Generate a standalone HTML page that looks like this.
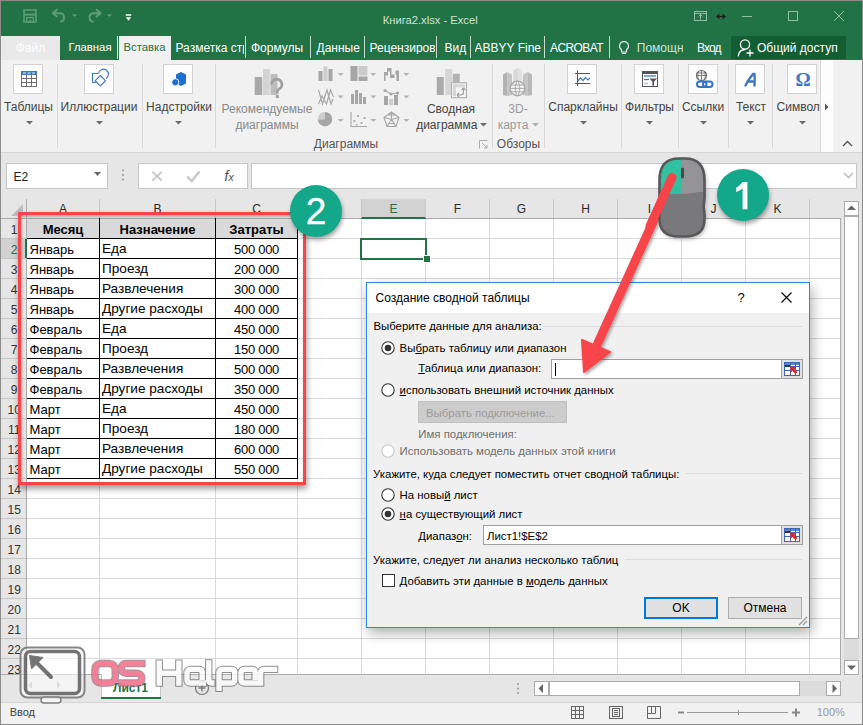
<!DOCTYPE html><html><head><meta charset="utf-8"><style>
html,body{margin:0;padding:0;width:863px;height:725px;overflow:hidden;background:#f1f1f1;font-family:"Liberation Sans", sans-serif;}
.a{position:absolute;}
.t{position:absolute;white-space:nowrap;line-height:1;}
svg{position:absolute;overflow:visible}
</style></head><body>
<div class="a" style="left:0px;top:0px;width:863px;height:60px;background:#217346"></div>
<div class="t" style="left:430.2px;transform:translateX(-50%);top:14.92px;font-size:11.2px;color:#cfe3d6;font-weight:400;">Книга2.xlsx - Excel</div>
<svg style="left:0;top:0" width="140" height="36">
<g fill="none" stroke="#5e9c78" stroke-width="1.6">
<rect x="24" y="10" width="12" height="12"/>
<path d="M24 14.6h12" stroke-width="2"/>
<rect x="26.6" y="17.6" width="6.8" height="4.4" stroke-width="1.3"/>
</g>
<rect x="29.2" y="19.8" width="1.6" height="2.4" fill="#5e9c78"/>
<g fill="none" stroke="#5e9c78" stroke-width="2" stroke-linejoin="round">
<path d="M57.5 9.3L52.8 13.2 57.5 17.1"/><path d="M53.3 13.2H59.5C62.3 13.2 64 15 64 17.4 64 19.8 62.3 21.4 60 21.7"/>
<path d="M96 9.3L100.7 13.2 96 17.1"/><path d="M100.2 13.2H94C91.2 13.2 89.5 15 89.5 17.4 89.5 19.8 91.2 21.4 93.5 21.7"/>
</g>
<path d="M72 14.2h5l-2.5 2.8z M107 14.2h5l-2.5 2.8z" fill="#5e9c78"/>
<path d="M125.8 14.3h5.4v1.5h-5.4z M125.8 17.2h5.4l-2.7 3.6z" fill="#fff"/>
</svg>
<svg style="left:680;top:0;left:680px" width="183" height="36">
<g fill="none" stroke="#8fbfa2" stroke-width="1">
<rect x="14.5" y="11.5" width="12" height="9"/><path d="M14.5 13.5h12M20.5 19.5v-5M18.5 16.5l2-2 2 2"/>
<path d="M62 16.5h10"/>
<rect x="108.5" y="11.5" width="9" height="9"/>
<path d="M154 11l10 10M164 11l-10 10"/>
</g>
<path d="M37 16.5h8" stroke="#1e1e1e" stroke-width="1.2"/><path d="M36 16.5l3.5-3v6zM46 16.5l-3.5-3v6z" fill="#1e1e1e"/>
</svg>
<div class="a" style="left:1px;top:36px;width:59px;height:24px;background:#e9e9e9"></div>
<div class="t" style="left:30.5px;transform:translateX(-50%);top:41.84px;font-size:12px;color:#ffffff;font-weight:400;">Файл</div>
<div class="t" style="left:68.5px;top:42.43px;font-size:11.3px;color:#ffffff;font-weight:400;">Главная</div>
<div class="a" style="left:117px;top:36px;width:1px;height:23px;background:#d8e8dd"></div>
<div class="a" style="left:119px;top:36px;width:52px;height:24px;background:#f1f1f1"></div>
<div class="t" style="left:123.5px;top:42.43px;font-size:11.3px;color:#217346;font-weight:400;">Вставка</div>
<div class="t" style="left:175.5px;top:41.84px;font-size:12px;color:#ffffff;font-weight:400;width:68px;overflow:hidden;">Разметка стр</div>
<div class="a" style="left:245px;top:36px;width:1px;height:22px;background:#c8dccf"></div>
<div class="a" style="left:310px;top:36px;width:1px;height:22px;background:#c8dccf"></div>
<div class="a" style="left:364px;top:36px;width:1px;height:22px;background:#c8dccf"></div>
<div class="a" style="left:436px;top:36px;width:1px;height:22px;background:#c8dccf"></div>
<div class="a" style="left:470px;top:36px;width:1px;height:22px;background:#c8dccf"></div>
<div class="a" style="left:544px;top:36px;width:1px;height:22px;background:#c8dccf"></div>
<div class="a" style="left:609px;top:36px;width:1px;height:22px;background:#c8dccf"></div>
<div class="t" style="left:251px;top:41.84px;font-size:12px;color:#ffffff;font-weight:400;">Формулы</div>
<div class="t" style="left:316.5px;top:41.84px;font-size:12px;color:#ffffff;font-weight:400;">Данные</div>
<div class="t" style="left:369.5px;top:41.84px;font-size:12px;color:#ffffff;font-weight:400;width:65px;overflow:hidden;">Рецензирование</div>
<div class="t" style="left:444.5px;top:41.84px;font-size:12px;color:#ffffff;font-weight:400;">Вид</div>
<div class="t" style="left:474.5px;top:41.84px;font-size:12px;color:#ffffff;font-weight:400;width:66px;overflow:hidden;">ABBYY FineReader</div>
<div class="t" style="left:550px;top:41.84px;font-size:12px;color:#ffffff;font-weight:400;letter-spacing:-0.6px">ACROBAT</div>
<svg style="left:617px;top:40px" width="14" height="16"><path d="M7 1.5a4.5 4.5 0 0 0-2.5 8.2v2.3h5v-2.3A4.5 4.5 0 0 0 7 1.5zM5 13.5h4" fill="none" stroke="#fff" stroke-width="1.1"/></svg>
<div class="t" style="left:636.8px;top:41.84px;font-size:12px;color:#cfe3d6;font-weight:400;width:46px;overflow:hidden;">Помощн</div>
<div class="t" style="left:697px;top:41.84px;font-size:12px;color:#ffffff;font-weight:400;letter-spacing:-0.9px">Вход</div>
<div class="a" style="left:731px;top:36px;width:115px;height:23px;background:#135d33"></div>
<svg style="left:736px;top:38px" width="20" height="20"><g fill="none" stroke="#fff" stroke-width="1.3"><circle cx="9" cy="6.5" r="4.6"/><path d="M2.2 18.3c0.5-4 3.2-6.8 7-6.8"/><path d="M14 11.5v7M10.5 15h7"/></g></svg>
<div class="t" style="left:757px;top:41.84px;font-size:12px;color:#ffffff;font-weight:400;">Общий доступ</div>
<div class="a" style="left:1px;top:60px;width:861px;height:92px;background:#f1f1f1"></div>
<div class="a" style="left:1px;top:152px;width:861px;height:1px;background:#d5d5d5"></div>
<div class="a" style="left:57px;top:64px;width:1px;height:84px;background:#d9d9d9"></div>
<div class="a" style="left:142px;top:64px;width:1px;height:84px;background:#d9d9d9"></div>
<div class="a" style="left:215px;top:64px;width:1px;height:84px;background:#d9d9d9"></div>
<div class="a" style="left:492px;top:64px;width:1px;height:84px;background:#d9d9d9"></div>
<div class="a" style="left:544px;top:64px;width:1px;height:84px;background:#d9d9d9"></div>
<div class="a" style="left:621px;top:64px;width:1px;height:84px;background:#d9d9d9"></div>
<div class="a" style="left:678px;top:64px;width:1px;height:84px;background:#d9d9d9"></div>
<div class="a" style="left:728px;top:64px;width:1px;height:84px;background:#d9d9d9"></div>
<div class="a" style="left:772px;top:64px;width:1px;height:84px;background:#d9d9d9"></div>
<div class="a" style="left:13px;top:64px;width:30px;height:30px;background:#fdfdfd;border:1px solid #d2d2d2;box-sizing:border-box"></div>
<div class="t" style="left:28.5px;transform:translateX(-50%);top:100.84px;font-size:12px;color:#444;font-weight:400;">Таблицы</div>
<svg style="left:25.5px;top:120.5px" width="7" height="4"><path d="M0 0h7l-3.5 3.5z" fill="#6a6a6a"/></svg>
<svg style="left:13px;top:64px" width="30" height="30"><rect x="8.5" y="7.5" width="15" height="15" fill="#fff" stroke="#6d6d6d" stroke-width="1"/><rect x="8" y="7" width="16" height="4" fill="#3f78c0"/><path d="M10 9h3M14.5 9h3M19 9h3" stroke="#fff" stroke-width="0.9"/><path d="M8.5 14.5h15M8.5 18.5h15M13.5 11v11.5M18.5 11v11.5" stroke="#6d6d6d" stroke-width="1"/></svg>
<div class="a" style="left:84px;top:64px;width:30px;height:30px;background:#fdfdfd;border:1px solid #d2d2d2;box-sizing:border-box"></div>
<div class="t" style="left:99px;transform:translateX(-50%);top:100.84px;font-size:12px;color:#444;font-weight:400;">Иллюстрации</div>
<svg style="left:96px;top:120.5px" width="7" height="4"><path d="M0 0h7l-3.5 3.5z" fill="#6a6a6a"/></svg>
<svg style="left:84px;top:64px" width="30" height="30"><path d="M14 9.5h-5.5v9h4.5" fill="none" stroke="#3f78c0" stroke-width="1.1"/><path d="M14.5 9.5a5 5 0 1 1 7.5 5" fill="none" stroke="#3f78c0" stroke-width="1.1"/><path d="M16.3 11.5l5.2 5.2-5.2 5.2-5.2-5.2z" fill="#fff" stroke="#3f78c0" stroke-width="1.1"/></svg>
<div class="a" style="left:163px;top:64px;width:30px;height:30px;background:#fdfdfd;border:1px solid #d2d2d2;box-sizing:border-box"></div>
<div class="t" style="left:179px;transform:translateX(-50%);top:100.84px;font-size:12px;color:#444;font-weight:400;">Надстройки</div>
<svg style="left:175px;top:120.5px" width="7" height="4"><path d="M0 0h7l-3.5 3.5z" fill="#6a6a6a"/></svg>
<svg style="left:163px;top:64px" width="30" height="30"><path d="M18 8l5 2.6v8.8l-5 2.6-5-2.6v-8.8z" fill="#1f6fd0"/><circle cx="12.3" cy="18.3" r="3.6" fill="#1f6fd0" stroke="#fff" stroke-width="0.9"/></svg>
<svg style="left:250px;top:62px" width="40" height="40"><rect x="4.7" y="15" width="7.5" height="18" fill="#a9a9a9"/><rect x="13" y="7" width="6.7" height="26" fill="#d3d3d3"/><rect x="20.5" y="12" width="7" height="21" fill="#bdbdbd"/><path d="M21.5 22.5a5.2 5.2 0 1 1 7.5 4.6c-1.2 0.7-1.8 1.5-1.8 3v1.5" fill="none" stroke="#a0a0a0" stroke-width="2.8"/><rect x="25.8" y="33" width="3" height="3" fill="#a0a0a0"/></svg>
<div class="t" style="left:267px;transform:translateX(-50%);top:103.34px;font-size:12px;color:#8a8a8a;font-weight:400;">Рекомендуемые</div>
<div class="t" style="left:267px;transform:translateX(-50%);top:118.84px;font-size:12px;color:#8a8a8a;font-weight:400;">диаграммы</div>
<svg style="left:316px;top:64px" width="96" height="68">
<g fill="#a6a6a6">
<rect x="2.5" y="7" width="4" height="10"/><rect x="7.5" y="2.5" width="4" height="14.5" fill="#cdcdcd"/><rect x="12.5" y="5" width="4" height="12"/>
<rect x="34.5" y="2" width="7" height="15"/><rect x="42.5" y="2" width="9" height="9.5" fill="#cbcbcb"/><rect x="42.5" y="12.5" width="9" height="4.5"/>
<path d="M68 17v-9h3v-4h4.5v6.5h4v-4h3.5v10.5h-2.5v-6.5h-2v3.5h-4.5v-6.5h-2v4h-2.5v5.5z"/>
<rect x="35" y="30" width="3" height="10"/><rect x="39" y="26" width="3" height="14"/><rect x="43" y="29" width="3" height="11"/><rect x="47" y="33" width="3" height="7"/>
<rect x="68" y="32" width="4" height="9"/><rect x="73" y="35" width="4" height="6" fill="#cdcdcd"/><rect x="78" y="31" width="4" height="10"/>
<circle cx="69" cy="26.5" r="1.6"/><circle cx="75" cy="30" r="1.6"/><circle cx="81.5" cy="29" r="1.6"/>
</g>
<g fill="none" stroke="#a6a6a6" stroke-width="1.1">
<path d="M2.5 26l4 14 4.5-14 4 14 2-5M2.5 40l3.5-8 4.5 8 4-14 3 7"/>
<path d="M69 26.5l6 3.5 6.5-1"/>
<path d="M35 48v14.5h16"/>
<path d="M75.5 48l7.5 5.5-3 9h-9l-3-9z M75.5 48v7.5M68 53.5l7.5 2 7.5-2M75.5 55.5l-4.5 7M75.5 55.5l4.5 7M71 51l9 0M72 59.5h7"/>
</g>
<path d="M9 55.2V48a7.2 7.2 0 1 1-7.2 7.2z" fill="#a6a6a6"/><path d="M9 55.2H1.8A7.2 7.2 0 0 1 9 48z" fill="#cdcdcd"/>
<g fill="#b0b0b0"><rect x="37.5" y="56" width="2" height="2"/><rect x="41" y="51" width="2" height="2"/><rect x="44.5" y="58" width="2" height="2"/><rect x="47.5" y="53" width="2" height="2"/><rect x="40" y="60" width="1.6" height="1.6"/></g>
<g fill="#b4b4b4"><path d="M21.6 9h6l-3 3z"/><path d="M54.3 9h6l-3 3z"/><path d="M87.3 9h6l-3 3z"/><path d="M21.6 31.5h6l-3 3z"/><path d="M54.3 31.5h6l-3 3z"/><path d="M87.3 31.5h6l-3 3z"/><path d="M21.6 55h6l-3 3z"/><path d="M54.3 55h6l-3 3z"/><path d="M87.3 55h6l-3 3z"/></g>
</svg>
<svg style="left:425px;top:62px" width="45" height="40"><rect x="11.8" y="15" width="7" height="18" fill="#ababab"/><rect x="20.2" y="7" width="7" height="26" fill="#d6d6d6"/><rect x="27.8" y="11.8" width="7" height="9" fill="#b3b3b3"/><rect x="26.5" y="20.7" width="15" height="15" fill="#f4f4f4" stroke="#b0b0b0" stroke-width="1.1"/><rect x="28" y="22.3" width="12" height="3" fill="#d6d6d6"/><rect x="28" y="22.3" width="3" height="12" fill="#d6d6d6"/><path d="M32 33l2-2M32 33l2 2M32 33h3.5a3 3 0 0 0 3-3v-4M38.5 26l-2 2M38.5 26l2 2" fill="none" stroke="#a0a0a0" stroke-width="1.1"/></svg>
<div class="t" style="left:451px;transform:translateX(-50%);top:103.34px;font-size:12px;color:#444;font-weight:400;">Сводная</div>
<div class="t" style="left:446.8px;transform:translateX(-50%);top:118.84px;font-size:12px;color:#444;font-weight:400;">диаграмма</div>
<svg style="left:479.5px;top:122.5px" width="7" height="4"><path d="M0 0h7l-3.5 3.5z" fill="#6a6a6a"/></svg>
<div class="t" style="left:346px;transform:translateX(-50%);top:138.44px;font-size:12px;color:#555;font-weight:400;">Диаграммы</div>
<svg style="left:479px;top:140px" width="9" height="9"><path d="M0.5 8.5v-8h8" fill="none" stroke="#aaa"/><path d="M3 3l5 5M8 5v3h-3" fill="none" stroke="#aaa"/></svg>
<svg style="left:500px;top:62px" width="36" height="40"><path d="M3 12.5l4.5-2.5v24l-4.5-1z" fill="#b3b3b3"/><path d="M7.5 10l4.5 2.5v20.5l-4.5 1z" fill="#c4c4c4"/><path d="M13.3 8.5l4.5-2.5v22h-4.5z" fill="#d9d6d9"/><path d="M17.8 6l4.5 2.5v19.5h-4.5z" fill="#e2e0e2"/><path d="M23 12.5l4.5-2.5v24l-4.5-1z" fill="#c4c4c4"/><path d="M27.5 10l4.5 2.5v20.5l-4.5 1z" fill="#b8b8b8"/><circle cx="17.5" cy="26.4" r="7.3" fill="#f4f4f4" stroke="#a9a9a9" stroke-width="1.4"/><path d="M10.5 26.4h14M11.5 23h12M11.5 29.8h12M17.5 19c-3 3.5-3 11.3 0 14.8M17.5 19c3 3.5 3 11.3 0 14.8" fill="none" stroke="#a9a9a9" stroke-width="1"/></svg>
<div class="t" style="left:518px;transform:translateX(-50%);top:103.34px;font-size:12px;color:#9a9a9a;font-weight:400;">3D-</div>
<div class="t" style="left:513px;transform:translateX(-50%);top:118.84px;font-size:12px;color:#9a9a9a;font-weight:400;">карта</div>
<svg style="left:532px;top:122.5px" width="7" height="4"><path d="M0 0h7l-3.5 3.5z" fill="#b0b0b0"/></svg>
<div class="t" style="left:518.5px;transform:translateX(-50%);top:138.44px;font-size:12px;color:#555;font-weight:400;">Обзоры</div>
<div class="a" style="left:567px;top:64px;width:30px;height:30px;background:#fdfdfd;border:1px solid #d2d2d2;box-sizing:border-box"></div>
<div class="t" style="left:583px;transform:translateX(-50%);top:100.84px;font-size:12px;color:#444;font-weight:400;">Спарклайны</div>
<svg style="left:580px;top:120.5px" width="7" height="4"><path d="M0 0h7l-3.5 3.5z" fill="#6a6a6a"/></svg>
<svg style="left:567px;top:64px" width="30" height="30"><path d="M10.5 6.5v15.5M8 9.5h15M8 19.5h15" stroke="#555" stroke-width="1.1" fill="none"/><path d="M11 17l2.5-3 2.5 2.5 2.5-3 2.5 2.5 2-2" stroke="#4a7ebb" stroke-width="1.2" fill="none"/></svg>
<div class="a" style="left:634px;top:64px;width:30px;height:30px;background:#fdfdfd;border:1px solid #d2d2d2;box-sizing:border-box"></div>
<div class="t" style="left:649.5px;transform:translateX(-50%);top:100.84px;font-size:12px;color:#444;font-weight:400;">Фильтры</div>
<svg style="left:646px;top:120.5px" width="7" height="4"><path d="M0 0h7l-3.5 3.5z" fill="#6a6a6a"/></svg>
<svg style="left:634px;top:64px" width="30" height="30"><rect x="8.5" y="7.5" width="15" height="15" fill="#fff" stroke="#555" stroke-width="1"/><rect x="8" y="7" width="16" height="3" fill="#555"/><path d="M10 12h12" stroke="#3f78c0" stroke-width="1.3"/><path d="M10 15.5h5" stroke="#3f78c0" stroke-width="1.3"/><path d="M10 19.5h4" stroke="#a9c3e3" stroke-width="1.3"/><path d="M15.5 14.5h7.5l-3 3.2v4h-1.6v-4z" fill="#555"/></svg>
<div class="a" style="left:688px;top:64px;width:30px;height:30px;background:#fdfdfd;border:1px solid #d2d2d2;box-sizing:border-box"></div>
<div class="t" style="left:703px;transform:translateX(-50%);top:100.84px;font-size:12px;color:#444;font-weight:400;">Ссылки</div>
<svg style="left:700px;top:120.5px" width="7" height="4"><path d="M0 0h7l-3.5 3.5z" fill="#6a6a6a"/></svg>
<svg style="left:688px;top:64px" width="30" height="30"><circle cx="13.5" cy="11.5" r="5" fill="#fff" stroke="#666" stroke-width="1.1"/><path d="M8.5 11.5h10M8.5 9h10M13.5 6.5v10M10.5 7.5c-1 2-1 6 0 8M16.5 7.5c1 2 1 6 0 8" fill="none" stroke="#666" stroke-width="0.8"/><rect x="9" y="17.5" width="9.5" height="5.5" rx="2.75" fill="none" stroke="#3574c4" stroke-width="2"/><rect x="15" y="17.5" width="9.5" height="5.5" rx="2.75" fill="none" stroke="#3574c4" stroke-width="2"/></svg>
<div class="a" style="left:735px;top:64px;width:30px;height:30px;background:#fdfdfd;border:1px solid #d2d2d2;box-sizing:border-box"></div>
<div class="t" style="left:751px;transform:translateX(-50%);top:100.84px;font-size:12px;color:#444;font-weight:400;">Текст</div>
<svg style="left:747px;top:120.5px" width="7" height="4"><path d="M0 0h7l-3.5 3.5z" fill="#6a6a6a"/></svg>
<svg style="left:735px;top:64px" width="30" height="30"><path d="M10.5 21.5c1.5-3 4.5-8 7.5-11.5h1.5c0.3 3.5 0.2 8 0 11.5M12.5 17.5h7" fill="none" stroke="#3f78c0" stroke-width="2.4" stroke-linecap="round" stroke-linejoin="round"/></svg>
<div class="a" style="left:787px;top:64px;width:30px;height:30px;background:#fdfdfd;border:1px solid #d2d2d2;box-sizing:border-box"></div>
<div class="t" style="left:776.6px;top:100.84px;font-size:12px;color:#444;font-weight:400;width:44px;overflow:hidden;">Символ</div>
<svg style="left:799px;top:120.5px" width="7" height="4"><path d="M0 0h7l-3.5 3.5z" fill="#6a6a6a"/></svg>
<svg style="left:787px;top:64px" width="30" height="30"><text x="16" y="21.5" text-anchor="middle" font-family="Liberation Serif" font-weight="700" font-size="19" fill="#3f78c0">Ω</text></svg>
<div class="a" style="left:820px;top:60px;width:13px;height:92px;background:#fdfdfd;border-left:1px solid #d6d6d6;box-sizing:border-box"></div>
<svg style="left:824px;top:103px" width="6" height="8"><path d="M1 0.5l3.5 3.5-3.5 3.5z" fill="#555"/></svg>
<svg style="left:842px;top:140px" width="11" height="7"><path d="M1 6l4.5-4.5 4.5 4.5" fill="none" stroke="#555" stroke-width="1.4"/></svg>
<div class="a" style="left:1px;top:153px;width:861px;height:46px;background:#e6e6e6"></div>
<div class="a" style="left:6px;top:163px;width:102px;height:26px;background:#fff;border:1px solid #c6c6c6;box-sizing:border-box"></div>
<div class="t" style="left:13.5px;top:171.34px;font-size:12px;color:#222;font-weight:400;">E2</div>
<svg style="left:94px;top:172px" width="8" height="5"><path d="M0 0h7l-3.5 4z" fill="#666"/></svg>
<svg style="left:121px;top:168px" width="4" height="16"><circle cx="2" cy="2.5" r="1" fill="#999"/><circle cx="2" cy="7" r="1" fill="#999"/><circle cx="2" cy="11.5" r="1" fill="#999"/></svg>
<div class="a" style="left:138px;top:163px;width:110px;height:26px;background:#fff;border:1px solid #c6c6c6;box-sizing:border-box"></div>
<svg style="left:138px;top:163px" width="110" height="26"><path d="M14.2 8.6l9.8 9M24 8.6l-9.8 9" stroke="#c4c4c4" stroke-width="1.7"/><path d="M49.3 13.6l4.4 4.6 7.7-9.6" stroke="#c8c8c8" stroke-width="2.4" fill="none"/></svg>
<div class="t" style="left:229px;transform:translateX(-50%);top:167.80px;font-size:15px;color:#555;font-weight:400;font-family:"Liberation Serif";font-weight:700;"><i>f</i><span style="font-size:11px"><i>x</i></span></div>
<div class="a" style="left:251px;top:163px;width:606px;height:26px;background:#fff;border:1px solid #c6c6c6;box-sizing:border-box"></div>
<svg style="left:843px;top:172px" width="11" height="7"><path d="M1 1l4.5 4.5 4.5-4.5" stroke="#bdbdbd" stroke-width="1.6" fill="none"/></svg>
<div class="a" style="left:1px;top:199px;width:861px;height:476px;background:#e6e6e6"></div>
<div class="a" style="left:26px;top:219px;width:814px;height:455px;background:#fff"></div>
<div class="a" style="left:26px;top:199px;width:815px;height:19px;background:#e6e6e6"></div>
<div class="a" style="left:361px;top:199px;width:64px;height:19px;background:#d2d2d2"></div>
<div class="a" style="left:1px;top:218px;width:840px;height:1px;background:#ababab"></div>
<div class="a" style="left:361px;top:217px;width:65px;height:2px;background:#217346"></div>
<div class="t" style="left:63.0px;transform:translateX(-50%);top:202.84px;font-size:12px;color:#2a2a2a;font-weight:400;">A</div>
<div class="t" style="left:157.5px;transform:translateX(-50%);top:202.84px;font-size:12px;color:#2a2a2a;font-weight:400;">B</div>
<div class="t" style="left:256.5px;transform:translateX(-50%);top:202.84px;font-size:12px;color:#2a2a2a;font-weight:400;">C</div>
<div class="t" style="left:329.5px;transform:translateX(-50%);top:202.84px;font-size:12px;color:#2a2a2a;font-weight:400;">D</div>
<div class="t" style="left:393.5px;transform:translateX(-50%);top:202.84px;font-size:12px;color:#217346;font-weight:400;">E</div>
<div class="t" style="left:457.5px;transform:translateX(-50%);top:202.84px;font-size:12px;color:#2a2a2a;font-weight:400;">F</div>
<div class="t" style="left:521.5px;transform:translateX(-50%);top:202.84px;font-size:12px;color:#2a2a2a;font-weight:400;">G</div>
<div class="t" style="left:585.5px;transform:translateX(-50%);top:202.84px;font-size:12px;color:#2a2a2a;font-weight:400;">H</div>
<div class="t" style="left:649.5px;transform:translateX(-50%);top:202.84px;font-size:12px;color:#2a2a2a;font-weight:400;">I</div>
<div class="t" style="left:713.5px;transform:translateX(-50%);top:202.84px;font-size:12px;color:#2a2a2a;font-weight:400;">J</div>
<div class="t" style="left:777.5px;transform:translateX(-50%);top:202.84px;font-size:12px;color:#2a2a2a;font-weight:400;">K</div>
<div class="a" style="left:99px;top:199px;width:1px;height:19px;background:#c6c6c6"></div>
<div class="a" style="left:215px;top:199px;width:1px;height:19px;background:#c6c6c6"></div>
<div class="a" style="left:297px;top:199px;width:1px;height:19px;background:#c6c6c6"></div>
<div class="a" style="left:361px;top:199px;width:1px;height:19px;background:#c6c6c6"></div>
<div class="a" style="left:425px;top:199px;width:1px;height:19px;background:#c6c6c6"></div>
<div class="a" style="left:489px;top:199px;width:1px;height:19px;background:#c6c6c6"></div>
<div class="a" style="left:553px;top:199px;width:1px;height:19px;background:#c6c6c6"></div>
<div class="a" style="left:617px;top:199px;width:1px;height:19px;background:#c6c6c6"></div>
<div class="a" style="left:681px;top:199px;width:1px;height:19px;background:#c6c6c6"></div>
<div class="a" style="left:745px;top:199px;width:1px;height:19px;background:#c6c6c6"></div>
<div class="a" style="left:809px;top:199px;width:1px;height:19px;background:#c6c6c6"></div>
<div class="a" style="left:26px;top:199px;width:1px;height:476px;background:#ababab"></div>
<svg style="left:10px;top:203px" width="14" height="14"><path d="M13 1v12h-12z" fill="#bdbdbd"/></svg>
<div class="a" style="left:99px;top:219px;width:1px;height:455px;background:#dadada"></div>
<div class="a" style="left:215px;top:219px;width:1px;height:455px;background:#dadada"></div>
<div class="a" style="left:297px;top:219px;width:1px;height:455px;background:#dadada"></div>
<div class="a" style="left:361px;top:219px;width:1px;height:455px;background:#dadada"></div>
<div class="a" style="left:425px;top:219px;width:1px;height:455px;background:#dadada"></div>
<div class="a" style="left:489px;top:219px;width:1px;height:455px;background:#dadada"></div>
<div class="a" style="left:553px;top:219px;width:1px;height:455px;background:#dadada"></div>
<div class="a" style="left:617px;top:219px;width:1px;height:455px;background:#dadada"></div>
<div class="a" style="left:681px;top:219px;width:1px;height:455px;background:#dadada"></div>
<div class="a" style="left:745px;top:219px;width:1px;height:455px;background:#dadada"></div>
<div class="a" style="left:809px;top:219px;width:1px;height:455px;background:#dadada"></div>
<div class="a" style="left:27px;top:238px;width:813px;height:1px;background:#dadada"></div>
<div class="a" style="left:1px;top:238px;width:25px;height:1px;background:#c6c6c6"></div>
<div class="a" style="left:27px;top:258px;width:813px;height:1px;background:#dadada"></div>
<div class="a" style="left:1px;top:258px;width:25px;height:1px;background:#c6c6c6"></div>
<div class="a" style="left:27px;top:278px;width:813px;height:1px;background:#dadada"></div>
<div class="a" style="left:1px;top:278px;width:25px;height:1px;background:#c6c6c6"></div>
<div class="a" style="left:27px;top:298px;width:813px;height:1px;background:#dadada"></div>
<div class="a" style="left:1px;top:298px;width:25px;height:1px;background:#c6c6c6"></div>
<div class="a" style="left:27px;top:318px;width:813px;height:1px;background:#dadada"></div>
<div class="a" style="left:1px;top:318px;width:25px;height:1px;background:#c6c6c6"></div>
<div class="a" style="left:27px;top:338px;width:813px;height:1px;background:#dadada"></div>
<div class="a" style="left:1px;top:338px;width:25px;height:1px;background:#c6c6c6"></div>
<div class="a" style="left:27px;top:358px;width:813px;height:1px;background:#dadada"></div>
<div class="a" style="left:1px;top:358px;width:25px;height:1px;background:#c6c6c6"></div>
<div class="a" style="left:27px;top:378px;width:813px;height:1px;background:#dadada"></div>
<div class="a" style="left:1px;top:378px;width:25px;height:1px;background:#c6c6c6"></div>
<div class="a" style="left:27px;top:398px;width:813px;height:1px;background:#dadada"></div>
<div class="a" style="left:1px;top:398px;width:25px;height:1px;background:#c6c6c6"></div>
<div class="a" style="left:27px;top:418px;width:813px;height:1px;background:#dadada"></div>
<div class="a" style="left:1px;top:418px;width:25px;height:1px;background:#c6c6c6"></div>
<div class="a" style="left:27px;top:438px;width:813px;height:1px;background:#dadada"></div>
<div class="a" style="left:1px;top:438px;width:25px;height:1px;background:#c6c6c6"></div>
<div class="a" style="left:27px;top:458px;width:813px;height:1px;background:#dadada"></div>
<div class="a" style="left:1px;top:458px;width:25px;height:1px;background:#c6c6c6"></div>
<div class="a" style="left:27px;top:478px;width:813px;height:1px;background:#dadada"></div>
<div class="a" style="left:1px;top:478px;width:25px;height:1px;background:#c6c6c6"></div>
<div class="a" style="left:27px;top:498px;width:813px;height:1px;background:#dadada"></div>
<div class="a" style="left:1px;top:498px;width:25px;height:1px;background:#c6c6c6"></div>
<div class="a" style="left:27px;top:518px;width:813px;height:1px;background:#dadada"></div>
<div class="a" style="left:1px;top:518px;width:25px;height:1px;background:#c6c6c6"></div>
<div class="a" style="left:27px;top:538px;width:813px;height:1px;background:#dadada"></div>
<div class="a" style="left:1px;top:538px;width:25px;height:1px;background:#c6c6c6"></div>
<div class="a" style="left:27px;top:558px;width:813px;height:1px;background:#dadada"></div>
<div class="a" style="left:1px;top:558px;width:25px;height:1px;background:#c6c6c6"></div>
<div class="a" style="left:27px;top:578px;width:813px;height:1px;background:#dadada"></div>
<div class="a" style="left:1px;top:578px;width:25px;height:1px;background:#c6c6c6"></div>
<div class="a" style="left:27px;top:598px;width:813px;height:1px;background:#dadada"></div>
<div class="a" style="left:1px;top:598px;width:25px;height:1px;background:#c6c6c6"></div>
<div class="a" style="left:27px;top:618px;width:813px;height:1px;background:#dadada"></div>
<div class="a" style="left:1px;top:618px;width:25px;height:1px;background:#c6c6c6"></div>
<div class="a" style="left:27px;top:638px;width:813px;height:1px;background:#dadada"></div>
<div class="a" style="left:1px;top:638px;width:25px;height:1px;background:#c6c6c6"></div>
<div class="a" style="left:27px;top:658px;width:813px;height:1px;background:#dadada"></div>
<div class="a" style="left:1px;top:658px;width:25px;height:1px;background:#c6c6c6"></div>
<div class="a" style="left:1px;top:239px;width:25px;height:19px;background:#d2d2d2"></div>
<div class="a" style="left:25px;top:239px;width:2px;height:19px;background:#217346"></div>
<div class="t" style="left:14.2px;transform:translateX(-50%);top:223.84px;font-size:12px;color:#333;font-weight:400;">1</div>
<div class="t" style="left:14.2px;transform:translateX(-50%);top:243.84px;font-size:12px;color:#217346;font-weight:400;">2</div>
<div class="t" style="left:14.2px;transform:translateX(-50%);top:263.84px;font-size:12px;color:#333;font-weight:400;">3</div>
<div class="t" style="left:14.2px;transform:translateX(-50%);top:283.84px;font-size:12px;color:#333;font-weight:400;">4</div>
<div class="t" style="left:14.2px;transform:translateX(-50%);top:303.84px;font-size:12px;color:#333;font-weight:400;">5</div>
<div class="t" style="left:14.2px;transform:translateX(-50%);top:323.84px;font-size:12px;color:#333;font-weight:400;">6</div>
<div class="t" style="left:14.2px;transform:translateX(-50%);top:343.84px;font-size:12px;color:#333;font-weight:400;">7</div>
<div class="t" style="left:14.2px;transform:translateX(-50%);top:363.84px;font-size:12px;color:#333;font-weight:400;">8</div>
<div class="t" style="left:14.2px;transform:translateX(-50%);top:383.84px;font-size:12px;color:#333;font-weight:400;">9</div>
<div class="t" style="left:14.2px;transform:translateX(-50%);top:403.84px;font-size:12px;color:#333;font-weight:400;">10</div>
<div class="t" style="left:14.2px;transform:translateX(-50%);top:423.84px;font-size:12px;color:#333;font-weight:400;">11</div>
<div class="t" style="left:14.2px;transform:translateX(-50%);top:443.84px;font-size:12px;color:#333;font-weight:400;">12</div>
<div class="t" style="left:14.2px;transform:translateX(-50%);top:463.84px;font-size:12px;color:#333;font-weight:400;">13</div>
<div class="t" style="left:14.2px;transform:translateX(-50%);top:483.84px;font-size:12px;color:#333;font-weight:400;">14</div>
<div class="t" style="left:14.2px;transform:translateX(-50%);top:503.84px;font-size:12px;color:#333;font-weight:400;">15</div>
<div class="t" style="left:14.2px;transform:translateX(-50%);top:523.84px;font-size:12px;color:#333;font-weight:400;">16</div>
<div class="t" style="left:14.2px;transform:translateX(-50%);top:543.84px;font-size:12px;color:#333;font-weight:400;">17</div>
<div class="t" style="left:14.2px;transform:translateX(-50%);top:563.84px;font-size:12px;color:#333;font-weight:400;">18</div>
<div class="t" style="left:14.2px;transform:translateX(-50%);top:583.84px;font-size:12px;color:#333;font-weight:400;">19</div>
<div class="t" style="left:14.2px;transform:translateX(-50%);top:603.84px;font-size:12px;color:#333;font-weight:400;">20</div>
<div class="t" style="left:14.2px;transform:translateX(-50%);top:623.84px;font-size:12px;color:#333;font-weight:400;">21</div>
<div class="t" style="left:14.2px;transform:translateX(-50%);top:643.84px;font-size:12px;color:#333;font-weight:400;">22</div>
<div class="t" style="left:14.2px;transform:translateX(-50%);top:663.84px;font-size:12px;color:#333;font-weight:400;">23</div>
<div class="a" style="left:27px;top:219px;width:270px;height:19px;background:#d9d9d9"></div>
<div class="a" style="left:27px;top:238px;width:271px;height:1px;background:#000"></div>
<div class="a" style="left:27px;top:258px;width:271px;height:1px;background:#000"></div>
<div class="a" style="left:27px;top:278px;width:271px;height:1px;background:#000"></div>
<div class="a" style="left:27px;top:298px;width:271px;height:1px;background:#000"></div>
<div class="a" style="left:27px;top:318px;width:271px;height:1px;background:#000"></div>
<div class="a" style="left:27px;top:338px;width:271px;height:1px;background:#000"></div>
<div class="a" style="left:27px;top:358px;width:271px;height:1px;background:#000"></div>
<div class="a" style="left:27px;top:378px;width:271px;height:1px;background:#000"></div>
<div class="a" style="left:27px;top:398px;width:271px;height:1px;background:#000"></div>
<div class="a" style="left:27px;top:418px;width:271px;height:1px;background:#000"></div>
<div class="a" style="left:27px;top:438px;width:271px;height:1px;background:#000"></div>
<div class="a" style="left:27px;top:458px;width:271px;height:1px;background:#000"></div>
<div class="a" style="left:27px;top:478px;width:271px;height:1px;background:#000"></div>
<div class="a" style="left:99px;top:218px;width:1px;height:261px;background:#000"></div>
<div class="a" style="left:215px;top:218px;width:1px;height:261px;background:#000"></div>
<div class="a" style="left:297px;top:218px;width:1px;height:261px;background:#000"></div>
<div class="t" style="left:63px;transform:translateX(-50%);top:223.00px;font-size:13px;color:#000;font-weight:700;">Месяц</div>
<div class="t" style="left:157.5px;transform:translateX(-50%);top:223.00px;font-size:13px;color:#000;font-weight:700;">Назначение</div>
<div class="t" style="left:256.5px;transform:translateX(-50%);top:223.00px;font-size:13px;color:#000;font-weight:700;">Затраты</div>
<div class="t" style="left:29.5px;top:243.00px;font-size:13px;color:#000;font-weight:400;">Январь</div>
<div class="t" style="left:102px;top:242.49px;font-size:13.6px;color:#000;font-weight:400;">Еда</div>
<div class="t" style="right:584px;top:243.00px;font-size:13px;color:#000;font-weight:400;letter-spacing:-0.3px">500 000</div>
<div class="t" style="left:29.5px;top:263.00px;font-size:13px;color:#000;font-weight:400;">Январь</div>
<div class="t" style="left:102px;top:262.49px;font-size:13.6px;color:#000;font-weight:400;">Проезд</div>
<div class="t" style="right:584px;top:263.00px;font-size:13px;color:#000;font-weight:400;letter-spacing:-0.3px">200 000</div>
<div class="t" style="left:29.5px;top:283.00px;font-size:13px;color:#000;font-weight:400;">Январь</div>
<div class="t" style="left:102px;top:282.49px;font-size:13.6px;color:#000;font-weight:400;">Развлечения</div>
<div class="t" style="right:584px;top:283.00px;font-size:13px;color:#000;font-weight:400;letter-spacing:-0.3px">300 000</div>
<div class="t" style="left:29.5px;top:303.00px;font-size:13px;color:#000;font-weight:400;">Январь</div>
<div class="t" style="left:102px;top:302.49px;font-size:13.6px;color:#000;font-weight:400;">Другие расходы</div>
<div class="t" style="right:584px;top:303.00px;font-size:13px;color:#000;font-weight:400;letter-spacing:-0.3px">400 000</div>
<div class="t" style="left:29.5px;top:323.00px;font-size:13px;color:#000;font-weight:400;">Февраль</div>
<div class="t" style="left:102px;top:322.49px;font-size:13.6px;color:#000;font-weight:400;">Еда</div>
<div class="t" style="right:584px;top:323.00px;font-size:13px;color:#000;font-weight:400;letter-spacing:-0.3px">450 000</div>
<div class="t" style="left:29.5px;top:343.00px;font-size:13px;color:#000;font-weight:400;">Февраль</div>
<div class="t" style="left:102px;top:342.49px;font-size:13.6px;color:#000;font-weight:400;">Проезд</div>
<div class="t" style="right:584px;top:343.00px;font-size:13px;color:#000;font-weight:400;letter-spacing:-0.3px">150 000</div>
<div class="t" style="left:29.5px;top:363.00px;font-size:13px;color:#000;font-weight:400;">Февраль</div>
<div class="t" style="left:102px;top:362.49px;font-size:13.6px;color:#000;font-weight:400;">Развлечения</div>
<div class="t" style="right:584px;top:363.00px;font-size:13px;color:#000;font-weight:400;letter-spacing:-0.3px">500 000</div>
<div class="t" style="left:29.5px;top:383.00px;font-size:13px;color:#000;font-weight:400;">Февраль</div>
<div class="t" style="left:102px;top:382.49px;font-size:13.6px;color:#000;font-weight:400;">Другие расходы</div>
<div class="t" style="right:584px;top:383.00px;font-size:13px;color:#000;font-weight:400;letter-spacing:-0.3px">350 000</div>
<div class="t" style="left:29.5px;top:403.00px;font-size:13px;color:#000;font-weight:400;">Март</div>
<div class="t" style="left:102px;top:402.49px;font-size:13.6px;color:#000;font-weight:400;">Еда</div>
<div class="t" style="right:584px;top:403.00px;font-size:13px;color:#000;font-weight:400;letter-spacing:-0.3px">450 000</div>
<div class="t" style="left:29.5px;top:423.00px;font-size:13px;color:#000;font-weight:400;">Март</div>
<div class="t" style="left:102px;top:422.49px;font-size:13.6px;color:#000;font-weight:400;">Проезд</div>
<div class="t" style="right:584px;top:423.00px;font-size:13px;color:#000;font-weight:400;letter-spacing:-0.3px">180 000</div>
<div class="t" style="left:29.5px;top:443.00px;font-size:13px;color:#000;font-weight:400;">Март</div>
<div class="t" style="left:102px;top:442.49px;font-size:13.6px;color:#000;font-weight:400;">Развлечения</div>
<div class="t" style="right:584px;top:443.00px;font-size:13px;color:#000;font-weight:400;letter-spacing:-0.3px">600 000</div>
<div class="t" style="left:29.5px;top:463.00px;font-size:13px;color:#000;font-weight:400;">Март</div>
<div class="t" style="left:102px;top:462.49px;font-size:13.6px;color:#000;font-weight:400;">Другие расходы</div>
<div class="t" style="right:584px;top:463.00px;font-size:13px;color:#000;font-weight:400;letter-spacing:-0.3px">550 000</div>
<div class="a" style="left:360px;top:238px;width:67px;height:22px;border:2px solid #217346;box-sizing:border-box"></div>
<div class="a" style="left:423px;top:255px;width:6px;height:6px;background:#217346;border:1px solid #fff;box-sizing:content-box"></div>
<div class="a" style="left:841px;top:199px;width:21px;height:476px;background:#e6e6e6"></div>
<div class="a" style="left:840px;top:219px;width:1px;height:456px;background:#ababab"></div>
<div class="a" style="left:844px;top:201px;width:15px;height:15px;background:#fff;border:1px solid #ababab;box-sizing:border-box"></div>
<svg style="left:847px;top:205px" width="9" height="6"><path d="M0 5h9l-4.5-4.5z" fill="#666"/></svg>
<div class="a" style="left:844px;top:216px;width:15px;height:444px;background:#dcdcdc"></div>
<div class="a" style="left:844px;top:216px;width:15px;height:423px;background:#fff;border:1px solid #ababab;box-sizing:border-box"></div>
<div class="a" style="left:844px;top:660px;width:15px;height:15px;background:#fff;border:1px solid #ababab;box-sizing:border-box"></div>
<svg style="left:847px;top:665px" width="9" height="6"><path d="M0 0.5h9l-4.5 4.5z" fill="#666"/></svg>
<div class="a" style="left:1px;top:674px;width:840px;height:1px;background:#ababab"></div>
<div class="a" style="left:1px;top:675px;width:861px;height:27px;background:#e6e6e6"></div>
<div class="a" style="left:101px;top:674px;width:60px;height:25px;background:#fff;border:1px solid #c6c6c6;border-top:none;box-sizing:border-box"></div>
<div class="a" style="left:101px;top:697px;width:60px;height:2px;background:#217346"></div>
<div class="t" style="left:130.5px;transform:translateX(-50%);top:682.34px;font-size:12px;color:#217346;font-weight:700;">Лист1</div>
<svg style="left:194px;top:680px" width="16" height="16"><circle cx="8" cy="8" r="6.5" fill="none" stroke="#777" stroke-width="1.2"/><path d="M8 4.5v7M4.5 8h7" stroke="#777" stroke-width="1.4"/></svg>
<svg style="left:516px;top:682px" width="4" height="14"><circle cx="2" cy="2" r="1" fill="#999"/><circle cx="2" cy="6.5" r="1" fill="#999"/><circle cx="2" cy="11" r="1" fill="#999"/></svg>
<div class="a" style="left:534px;top:681px;width:15px;height:15px;background:#fff;border:1px solid #ababab;box-sizing:border-box"></div>
<svg style="left:538px;top:684px" width="6" height="9"><path d="M5 0v9l-4.5-4.5z" fill="#666"/></svg>
<div class="a" style="left:549px;top:681px;width:277px;height:15px;background:#dcdcdc"></div>
<div class="a" style="left:549px;top:681px;width:251px;height:15px;background:#fff;border:1px solid #ababab;box-sizing:border-box"></div>
<div class="a" style="left:826px;top:681px;width:15px;height:15px;background:#fff;border:1px solid #ababab;box-sizing:border-box"></div>
<svg style="left:832px;top:684px" width="6" height="9"><path d="M0.5 0v9l4.5-4.5z" fill="#666"/></svg>
<div class="a" style="left:1px;top:702px;width:861px;height:1px;background:#d5d5d5"></div>
<div class="a" style="left:1px;top:703px;width:861px;height:21px;background:#f1f1f1"></div>
<div class="t" style="left:9.7px;top:707.29px;font-size:11px;color:#444;font-weight:400;">Ввод</div>
<svg style="left:570px;top:705px" width="230" height="16">
<g fill="none" stroke="#666" stroke-width="1">
<rect x="1.5" y="1.5" width="12" height="12"/><path d="M5.5 1.5v12M9.5 1.5v12M1.5 5.5h12M1.5 9.5h12"/>
<rect x="39.5" y="1.5" width="13" height="12"/><rect x="42.5" y="3.5" width="7" height="8"/><path d="M44 5.5h4M44 7.5h4M44 9.5h4"/>
<path d="M77.5 1.5h13v12h-13z M81.5 1.5v7h-4 M85.5 1.5v7h-4"/>
</g>
<path d="M108 7.5h6" stroke="#888" stroke-width="2"/>
<path d="M117 7.5h101M168.5 5v5" stroke="#999" stroke-width="1"/>
<path d="M222 7.5h8M226 3.5v8" stroke="#888" stroke-width="2"/>
</svg>
<div class="t" style="left:816.7px;top:707.19px;font-size:11px;color:#9a9a9a;font-weight:400;">100%</div>
<div class="a" style="left:0px;top:0px;width:863px;height:1px;background:#8c8c8c"></div>
<div class="a" style="left:0px;top:0px;width:1px;height:725px;background:#8c8c8c"></div>
<div class="a" style="left:862px;top:0px;width:1px;height:725px;background:#8c8c8c"></div>
<div class="a" style="left:0px;top:724px;width:863px;height:1px;background:#8c8c8c"></div>
<div class="a" style="left:18px;top:212px;width:288px;height:273px;border:3px solid #f94448;box-sizing:border-box;box-shadow:1px 4px 6px rgba(0,0,0,0.38), inset 1px 2px 3px rgba(0,0,0,0.25)"></div>
<div class="a" style="left:366px;top:282px;width:444px;height:346px;box-shadow:2px 5px 12px rgba(0,0,0,0.32);background:transparent"></div>
<div class="a" style="left:366px;top:282px;width:444px;height:346px;background:#f0f0f0;border:1px solid #2b8ae0;box-sizing:border-box"></div>
<div class="a" style="left:367px;top:283px;width:442px;height:30px;background:#fff"></div>
<div class="t" style="left:375.6px;top:291.54px;font-size:12px;color:#000;font-weight:400;">Создание сводной таблицы</div>
<div class="t" style="left:741px;transform:translateX(-50%);top:290.70px;font-size:13px;color:#000;font-weight:400;">?</div>
<svg style="left:781px;top:292px" width="11" height="11"><path d="M0.5 0.5l10 10M10.5 0.5l-10 10" stroke="#000" stroke-width="1.1"/></svg>
<div class="t" style="left:373.4px;top:321.15px;font-size:11.4px;color:#000;font-weight:400;">Выберите данные для анализа:</div>
<div class="a" style="left:543px;top:326px;width:260px;height:1px;background:#dcdcdc"></div>
<svg style="left:381px;top:341.4px" width="14" height="14"><circle cx="7" cy="7" r="6.2" fill="#fff" stroke="#333" stroke-width="1.1"/><circle cx="7" cy="7" r="3.3" fill="#333"/></svg>
<div class="t" style="left:399.6px;top:342.75px;font-size:11.4px;color:#000;font-weight:400;">Вы<u>б</u>рать таблицу или диапазон</div>
<div class="t" style="left:418.3px;top:363.15px;font-size:11.4px;color:#000;font-weight:400;"><u>Т</u>аблица или диапазон:</div>
<div class="a" style="left:551px;top:359px;width:252px;height:20px;background:#fff;border:1px solid #a0a0a0;box-sizing:border-box"></div>
<div class="a" style="left:555px;top:363px;width:1px;height:13px;background:#000"></div>
<div class="a" style="left:781px;top:359px;width:22px;height:20px;background:#e1e1e1;border:1px solid #a0a0a0;box-sizing:border-box"></div>
<svg style="left:784px;top:362px" width="16" height="14"><rect x="0.5" y="0.5" width="15" height="13" fill="#fff" stroke="#4164b4" stroke-width="1"/><rect x="1" y="1" width="14" height="2" fill="#5b82cc"/><path d="M1 4.5h14M1 8.5h14M6.5 1v12M11.5 1v12" stroke="#4164b4" stroke-width="1"/><rect x="1" y="3" width="5" height="2" fill="#333"/><path d="M6 4.5 L12 5.3 L10.5 6.9 L13.5 9.9 L11.5 11.9 L8.5 8.9 L6.8 10.5 Z" fill="#d42a2a"/></svg>
<svg style="left:381px;top:383.4px" width="14" height="14"><circle cx="7" cy="7" r="6.2" fill="#fff" stroke="#333" stroke-width="1.1"/></svg>
<div class="t" style="left:399.6px;top:384.55px;font-size:11.4px;color:#000;font-weight:400;"><u>и</u>спользовать внешний источник данных</div>
<div class="a" style="left:418px;top:401px;width:149px;height:22px;background:#cccccc;border:1px solid #bfbfbf;box-sizing:border-box"></div>
<div class="t" style="left:426px;top:407.65px;font-size:11.4px;color:#9b9b9b;font-weight:400;">Выбрать подключение...</div>
<div class="t" style="left:418.3px;top:428.85px;font-size:11.4px;color:#6d6d6d;font-weight:400;">Имя подключения:</div>
<svg style="left:381px;top:443.6px" width="14" height="14"><circle cx="7" cy="7" r="6.2" fill="#fff" stroke="#c6c6c6" stroke-width="1.1"/></svg>
<div class="t" style="left:399.6px;top:445.85px;font-size:11.4px;color:#6d6d6d;font-weight:400;">Использовать модель данных этой книги</div>
<div class="t" style="left:373.1px;top:469.35px;font-size:11.4px;color:#000;font-weight:400;">Укажите, куда следует поместить отчет сводной таблицы:</div>
<div class="a" style="left:685px;top:473px;width:118px;height:1px;background:#dcdcdc"></div>
<svg style="left:381px;top:487.8px" width="14" height="14"><circle cx="7" cy="7" r="6.2" fill="#fff" stroke="#333" stroke-width="1.1"/></svg>
<div class="t" style="left:399.6px;top:490.05px;font-size:11.4px;color:#000;font-weight:400;">На новы<u>й</u> лист</div>
<svg style="left:381px;top:506.6px" width="14" height="14"><circle cx="7" cy="7" r="6.2" fill="#fff" stroke="#333" stroke-width="1.1"/><circle cx="7" cy="7" r="3.3" fill="#333"/></svg>
<div class="t" style="left:399.6px;top:508.95px;font-size:11.4px;color:#000;font-weight:400;"><u>н</u>а существующий лист</div>
<div class="t" style="left:418.3px;top:530.95px;font-size:11.4px;color:#000;font-weight:400;">Диапаз<u>о</u>н:</div>
<div class="a" style="left:483px;top:525px;width:320px;height:20px;background:#fff;border:1px solid #a0a0a0;box-sizing:border-box"></div>
<div class="t" style="left:487px;top:530.95px;font-size:11.4px;color:#000;font-weight:400;">Лист1!$E$2</div>
<div class="a" style="left:781px;top:525px;width:22px;height:20px;background:#e1e1e1;border:1px solid #a0a0a0;box-sizing:border-box"></div>
<svg style="left:784px;top:528px" width="16" height="14"><rect x="0.5" y="0.5" width="15" height="13" fill="#fff" stroke="#4164b4" stroke-width="1"/><rect x="1" y="1" width="14" height="2" fill="#5b82cc"/><path d="M1 4.5h14M1 8.5h14M6.5 1v12M11.5 1v12" stroke="#4164b4" stroke-width="1"/><rect x="1" y="3" width="5" height="2" fill="#333"/><path d="M6 4.5 L12 5.3 L10.5 6.9 L13.5 9.9 L11.5 11.9 L8.5 8.9 L6.8 10.5 Z" fill="#d42a2a"/></svg>
<div class="t" style="left:373.1px;top:555.35px;font-size:11.4px;color:#000;font-weight:400;">Укажите, следует ли анализ несколько таблиц</div>
<div class="a" style="left:625px;top:559px;width:178px;height:1px;background:#dcdcdc"></div>
<div class="a" style="left:382px;top:574px;width:13px;height:13px;background:#fff;border:1px solid #333;box-sizing:border-box"></div>
<div class="t" style="left:399.6px;top:576.35px;font-size:11.4px;color:#000;font-weight:400;">Добавить эти данные в <u>м</u>одель данных</div>
<div class="a" style="left:644px;top:597px;width:74px;height:22px;background:#e1e1e1;border:2px solid #0078d7;box-sizing:border-box"></div>
<div class="t" style="left:681px;transform:translateX(-50%);top:602.34px;font-size:12px;color:#000;font-weight:400;">OK</div>
<div class="a" style="left:728px;top:597px;width:74px;height:22px;background:#e1e1e1;border:1px solid #adadad;box-sizing:border-box"></div>
<div class="t" style="left:765px;transform:translateX(-50%);top:602.34px;font-size:12px;color:#000;font-weight:400;">Отмена</div>
<svg style="left:797px;top:615px" width="11" height="11"><path d="M10 2l-8 8M10 6l-4 4" stroke="#999" stroke-width="1.2"/></svg>
<svg style="left:0;top:0" width="863" height="725">
<defs><filter id="sh" x="-20%" y="-20%" width="140%" height="140%"><feDropShadow dx="1.5" dy="2" stdDeviation="1.5" flood-opacity="0.35"/></filter></defs>
<g filter="url(#sh)">
<path d="M673 178 L597 345" stroke="#f84448" stroke-width="9" stroke-linecap="round"/>
<path d="M584 372 L582 340 L610 352 Z" fill="#f84448" stroke="#f84448" stroke-width="2" stroke-linejoin="round"/>
</g></svg>
<svg style="left:0;top:0" width="863" height="725">
<defs><filter id="sh2" x="-30%" y="-30%" width="160%" height="160%"><feDropShadow dx="1.5" dy="2.5" stdDeviation="2" flood-opacity="0.3"/></filter>
<clipPath id="mc"><path d="M659.5 180 C659.5 165 667 158.5 679 158.5 L685 158.5 C697 158.5 704.5 165 704.5 180 L704.5 197 C704.5 201 703.6 203 703.6 206 C703.6 209 704.5 211 704.5 215 L704.5 219 C704.5 231 697 236.5 685 236.5 L679 236.5 C667 236.5 659.5 231 659.5 219 L659.5 215 C659.5 211 660.4 209 660.4 206 C660.4 203 659.5 201 659.5 197 Z"/></clipPath></defs>
<path d="M659.5 180 C659.5 165 667 158.5 679 158.5 L685 158.5 C697 158.5 704.5 165 704.5 180 L704.5 197 C704.5 201 703.6 203 703.6 206 C703.6 209 704.5 211 704.5 215 L704.5 219 C704.5 231 697 236.5 685 236.5 L679 236.5 C667 236.5 659.5 231 659.5 219 L659.5 215 C659.5 211 660.4 209 660.4 206 C660.4 203 659.5 201 659.5 197 Z" fill="#79797b" filter="url(#sh2)"/>
<g clip-path="url(#mc)">
<rect x="650" y="150" width="32" height="44" fill="#31c1a1"/>
<path d="M682 150 H712 V190.5 C700 192 690 193.5 682 194 Z" fill="#949497"/>
</g>
<path d="M659.5 180 C659.5 165 667 158.5 679 158.5 L685 158.5 C697 158.5 704.5 165 704.5 180 L704.5 197 C704.5 201 703.6 203 703.6 206 C703.6 209 704.5 211 704.5 215 L704.5 219 C704.5 231 697 236.5 685 236.5 L679 236.5 C667 236.5 659.5 231 659.5 219 L659.5 215 C659.5 211 660.4 209 660.4 206 C660.4 203 659.5 201 659.5 197 Z" fill="none" stroke="#58585a" stroke-width="2.6"/>
<rect x="681" y="167.5" width="3" height="11" rx="1.5" fill="#4a4a4c"/>
</svg>
<svg style="left:0;top:0" width="863" height="725"><path d="M672 177.5 L650 226" stroke="#f84448" stroke-width="9" stroke-linecap="round"/></svg>
<div class="a" style="left:717px;top:168.7px;width:52px;height:52px;border-radius:50%;background:#13a88a;box-shadow:1px 3px 4px rgba(0,0,0,0.35)"></div>
<div class="t" style="left:743px;transform:translateX(-50%);top:176.88px;font-size:37px;color:#fff;font-weight:400;-webkit-text-stroke:0.3px #fff"></div>
<svg style="left:0;top:0" width="863" height="725"><path d="M742.6 182 H747.4 V209.2 H742.6 V188.3 C740.5 190 738.5 191.2 736.2 192 V187.6 C738.5 186.6 740.8 184.5 742.6 182 Z" fill="#fff"/></svg>
<div class="a" style="left:290px;top:185px;width:52px;height:52px;border-radius:50%;background:#13a88a;box-shadow:1px 3px 4px rgba(0,0,0,0.35)"></div>
<div class="t" style="left:316px;transform:translateX(-50%);top:193.18px;font-size:37px;color:#fff;font-weight:400;-webkit-text-stroke:0.3px #fff">2</div>
<svg style="left:0;top:630px" width="300" height="80">
<g opacity="0.9">
<rect x="20.5" y="17.5" width="64" height="50" rx="7" fill="rgba(255,255,255,0.45)" stroke="#7a7a7a" stroke-width="2"/>
<rect x="25.5" y="21.5" width="54" height="42" rx="5" fill="rgba(255,255,255,0.3)" stroke="#666" stroke-width="3.5"/><path d="M32 59l-3.5-4 3.5-4zM57 51l3.5 4-3.5 4z" fill="#dcdcdc"/>
<rect x="41" y="67" width="20" height="6" rx="3" fill="rgba(255,255,255,0.6)" stroke="#777" stroke-width="1.5"/>
<path d="M51 47 L34 30" stroke="#666" stroke-width="4" stroke-linecap="round"/>
<path d="M29.5 25.5 L43 27.5 L31.5 39 Z" fill="#666" stroke="#666" stroke-width="1" stroke-linejoin="round"/>
</g>
</svg>
<svg style="left:0;top:0" width="863" height="725">
<g fill="none" stroke-linejoin="round" opacity="0.88">
<path d="M101 663.55 H109.2 C113 663.55 115.25 665.8 115.25 669.6 V677 C115.25 680.8 113 683 109.2 683 H101 C97.2 683 94.95 680.8 94.95 677 V669.6 C94.95 665.8 97.2 663.55 101 663.55 Z M141.9 663.55 H126 C123 663.55 121.35 665.3 121.35 668.2 C121.35 671 123 673.25 126 673.25 H137 C140 673.25 141.9 675.5 141.9 678.2 C141.9 681 140 682.95 137 682.95 H121.35" stroke="#85707a" stroke-width="7.4" stroke-linecap="square" opacity="0.85"/>
<path d="M101 663.55 H109.2 C113 663.55 115.25 665.8 115.25 669.6 V677 C115.25 680.8 113 683 109.2 683 H101 C97.2 683 94.95 680.8 94.95 677 V669.6 C94.95 665.8 97.2 663.55 101 663.55 Z M141.9 663.55 H126 C123 663.55 121.35 665.3 121.35 668.2 C121.35 671 123 673.25 126 673.25 H137 C140 673.25 141.9 675.5 141.9 678.2 C141.9 681 140 682.95 137 682.95 H121.35" stroke="#f2718b" stroke-width="5.4" stroke-linecap="square"/>
<path d="M159.25 663.25 V683 M178.85 663.25 V683 M159.25 673.25 H178.85 M203.5 683 H190.4 C188.4 683 187 682 187 680 V672.5 C187 670.5 188.4 669.4 190.4 669.4 H199 C201 669.4 202.2 670.5 202.2 672.5 V677.3 M208.75 663 V680 C208.75 682 209.8 683 211.8 683 M219 688.3 V672.5 C219 670.5 220.4 669.4 222.4 669.4 H231.4 C233.4 669.4 234.7 670.5 234.7 672.5 V680 C234.7 682 233.4 683 231.4 683 H219 M256.3 683 H244.4 C242.4 683 241 682 241 680 V672.5 C241 670.5 242.4 669.4 244.4 669.4 H252 C254 669.4 255.2 670.5 255.2 672.5 V677.3 M260.65 683 V672.5 C260.65 670.5 262 669.4 264 669.4 H274.6" stroke="#6a6a6a" stroke-width="7.4" stroke-linecap="square" opacity="0.85"/>
<path d="M159.25 663.25 V683 M178.85 663.25 V683 M159.25 673.25 H178.85 M203.5 683 H190.4 C188.4 683 187 682 187 680 V672.5 C187 670.5 188.4 669.4 190.4 669.4 H199 C201 669.4 202.2 670.5 202.2 672.5 V677.3 M208.75 663 V680 C208.75 682 209.8 683 211.8 683 M219 688.3 V672.5 C219 670.5 220.4 669.4 222.4 669.4 H231.4 C233.4 669.4 234.7 670.5 234.7 672.5 V680 C234.7 682 233.4 683 231.4 683 H219 M256.3 683 H244.4 C242.4 683 241 682 241 680 V672.5 C241 670.5 242.4 669.4 244.4 669.4 H252 C254 669.4 255.2 670.5 255.2 672.5 V677.3 M260.65 683 V672.5 C260.65 670.5 262 669.4 264 669.4 H274.6" stroke="#fbfbfb" stroke-width="5.4" stroke-linecap="square"/>
</g>
</svg>
</body></html>
